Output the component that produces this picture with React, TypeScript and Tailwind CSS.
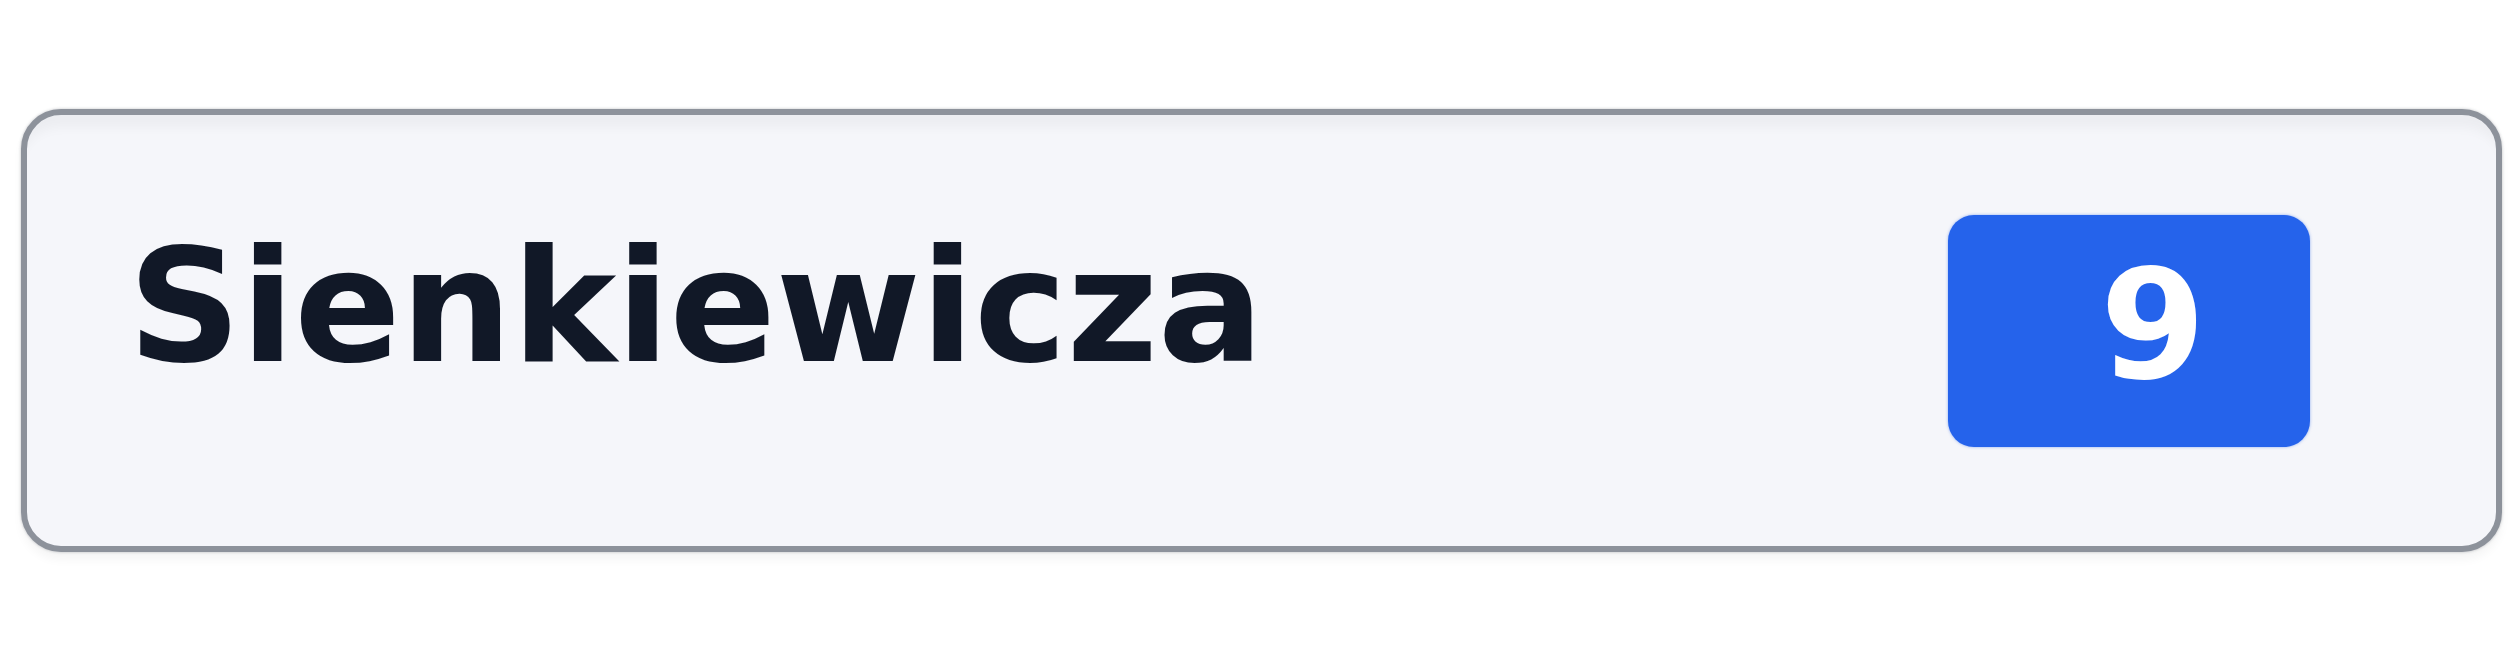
import React from 'react';

const StreetCard = ({ name, count }: { name: string; count: number }) => {
    return (
        <div className="box-border w-[2481px] h-[443px] rounded-[40px] border-[6px] border-[#8d929b] bg-[#f5f6fa] shadow-[inset_0_22px_12px_-10px_rgba(0,0,0,0.04),0_0_3px_rgba(110,115,125,0.45),0_8px_10px_rgba(0,0,0,0.04)] flex items-center justify-between pl-[101px] pr-[186px]">
            <span className="leading-none pb-[48px] text-[157px] font-bold tracking-[-0.3px] text-[#111827] font-['DejaVu_Sans',sans-serif]">
                {name}
            </span>
            <span className="box-border w-[362px] h-[232px] rounded-[26px] bg-[#2563eb] shadow-[0_0_3px_rgba(37,99,235,0.5)] flex items-center justify-center pl-[48px] pb-[10px] leading-none text-[152px] font-bold text-white font-['DejaVu_Sans',sans-serif]">
                {count}
            </span>
        </div>
    );
};

export default function App() {
    return (
        <div className="w-[2519px] h-[658px] bg-white pt-[109px] pl-[21px]">
            <StreetCard name="Sienkiewicza" count={9} />
        </div>
    );
}
